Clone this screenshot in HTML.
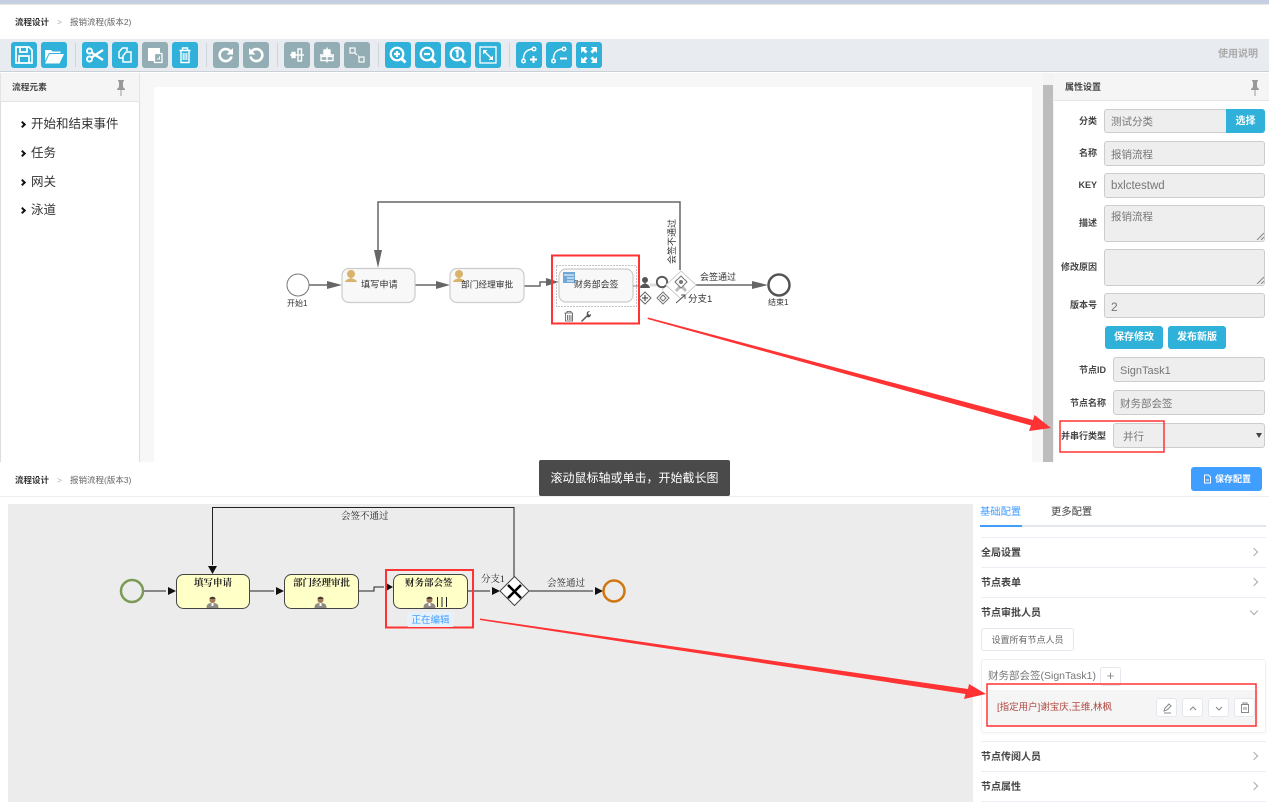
<!DOCTYPE html>
<html lang="zh"><head><meta charset="utf-8"><title>流程设计</title>
<style>
html,body{margin:0;padding:0;background:#fff}
#p{position:relative;width:1269px;height:802px;overflow:hidden;background:#fff;font-family:"Liberation Sans","Noto Sans CJK SC",sans-serif;color:#333;filter:blur(.3px)}
#p div{position:absolute;box-sizing:border-box}
.t{white-space:nowrap;height:16px;line-height:16px}
.b{width:26px;height:26px;top:42px;border-radius:3px;background:#2fb1d9}
.g{background:#93adb4}
.b svg{position:absolute;left:0;top:0}
.s{width:1px;height:24px;top:43px;background:#cfd5da}
.i{background:#eee;border:1px solid #ccc;border-radius:3px;color:#777;font-size:11px;padding-left:6px}
.l{font-size:9px;font-weight:700;color:#444;text-align:right;white-space:nowrap;height:14px;line-height:14px}
.m{font-size:12.500px;left:31px;color:#333}
.ch{left:20px;width:5px;height:5px;border-top:2px solid #111;border-right:2px solid #111;transform:rotate(45deg)}
.c{left:1251px;width:6px;height:6px;border-top:1px solid #aaa;border-right:1px solid #aaa;transform:rotate(45deg)}
.hr{left:981px;width:285px;height:1px;background:#ebeef5}
.r{left:981px;font-size:10px;font-weight:700;color:#444}
.sb{height:23px;top:326px;background:#2fb1d9;border-radius:3px;color:#fff;font-size:10px;font-weight:700;text-align:center;line-height:24px}
.ib{top:698px;height:19px;width:21px;background:#fff;border:1px solid #e4e7ed;border-radius:3px}
.ib svg{position:absolute;left:0;top:0}
</style></head><body><div id="p">
<div style="left:0;top:0;width:1269px;height:4px;background:#c5cfe2"></div>
<div style="left:0;top:4px;width:1269px;height:1px;background:#eee8dc"></div>
<div class="t" style="left:15px;top:14px;font-size:8.500px;font-weight:700;color:#333">流程设计</div>
<div class="t" style="left:57px;top:14px;font-size:8.500px;color:#aaa">&gt;</div>
<div class="t" style="left:70px;top:14px;font-size:8.500px;color:#666">报销流程(版本2)</div>

<div style="left:0;top:39px;width:1269px;height:33px;background:#e8ecf0;border-bottom:1px solid #c9d0d8"></div>

<div class="b" style="left:11px"><svg width="26" height="26" fill="none" stroke="#fff" stroke-width="1.700"><path d="M5 5h13l3 3v13H5z"/><path d="M9 5v5h7V5M8 21v-7h10v7"/></svg></div>
<div class="b" style="left:41px"><svg width="26" height="26" fill="#fff"><path d="M4 19V8h6l1.500 1.500h8V11H8z" /><path d="M4 21.500l4.500-9.500H23l-4.500 9.500z"/></svg></div>
<div class="s" style="left:75px"></div>
<div class="b" style="left:82px"><svg width="26" height="26" fill="none" stroke="#fff" stroke-width="1.900"><circle cx="7.500" cy="9" r="2.500"/><circle cx="7.500" cy="17" r="2.500"/><path d="M9.500 10.500L21 18M9.500 15.500L21 8" stroke-width="2.300"/></svg></div>
<div class="b" style="left:112px"><svg width="26" height="26" fill="none" stroke="#fff" stroke-width="1.500"><path d="M7 16V10l3.500-4H15v3M7 16h4"/><path d="M11 14l3-4h5v10h-8z"/></svg></div>
<div class="b g" style="left:142px"><svg width="26" height="26"><path d="M6 6h12v5h-6v8H6z" fill="#fff"/><path d="M12.500 11.500h7.500v9h-7.500z" fill="#93adb4" stroke="#fff" stroke-width="1.300"/><path d="M15 17h2.500v-2.500" fill="none" stroke="#fff"/></svg></div>
<div class="b" style="left:172px"><svg width="26" height="26" fill="none" stroke="#fff" stroke-width="1.400"><path d="M7.500 8.500h11M10.500 8.500V6h5v2.500M9 8.500v12h8v-12"/><path d="M11.200 11v7M13 11v7M14.800 11v7" stroke-width="1.100"/></svg></div>
<div class="s" style="left:206px"></div>
<div class="b g" style="left:213px"><svg width="26" height="26" fill="none" stroke="#fff" stroke-width="2.600"><path d="M17.500 9.500a6 6 0 1 0 1 5"/><path d="M20 6v6.500h-6.500z" fill="#fff" stroke="none"/></svg></div>
<div class="b g" style="left:243px"><svg width="26" height="26" fill="none" stroke="#fff" stroke-width="2.600"><path d="M8.500 9.500a6 6 0 1 1-1 5"/><path d="M6 6v6.500h6.500z" fill="#fff" stroke="none"/></svg></div>
<div class="s" style="left:277px"></div>
<div class="b g" style="left:284px"><svg width="26" height="26" fill="none" stroke="#fff" stroke-width="1.400"><rect x="8" y="10.500" width="3" height="5" fill="#fff"/><rect x="14" y="7" width="3.500" height="12"/><path d="M6 13h14"/></svg></div>
<div class="b g" style="left:314px"><svg width="26" height="26" fill="none" stroke="#fff" stroke-width="1.400"><rect x="10" y="8" width="6" height="4" fill="#fff"/><rect x="7" y="14.500" width="12" height="4"/><path d="M13 5.500v15M6 13h14"/></svg></div>
<div class="b g" style="left:344px"><svg width="26" height="26" fill="none" stroke="#fff" stroke-width="1.200"><rect x="6" y="6" width="5" height="5"/><rect x="15" y="15" width="5" height="5"/><path d="M11 11l2 2M14 14h1"/></svg></div>
<div class="s" style="left:378px"></div>
<div class="b" style="left:385px"><svg width="26" height="26" fill="none" stroke="#fff" stroke-width="2.200"><circle cx="12" cy="12" r="6.300"/><path d="M16.500 16.500l4 4" stroke-width="3"/><path d="M9 12h6M12 9v6"/></svg></div>
<div class="b" style="left:415px"><svg width="26" height="26" fill="none" stroke="#fff" stroke-width="2.200"><circle cx="12" cy="12" r="6.300"/><path d="M16.500 16.500l4 4" stroke-width="3"/><path d="M9 12h6"/></svg></div>
<div class="b" style="left:445px"><svg width="26" height="26" fill="none" stroke="#fff" stroke-width="2.200"><circle cx="12" cy="12" r="6.300"/><path d="M16.500 16.500l4 4" stroke-width="3"/><path d="M10.500 9.500l2-1v7"/></svg></div>
<div class="b" style="left:475px"><svg width="26" height="26" fill="none" stroke="#fff" stroke-width="1.300"><rect x="5" y="5" width="16" height="16"/><path d="M9 9l8 8" stroke-width="1.500"/><path d="M8 8h4.500L8 12.500zM18 18h-4.500l4.500-4.500z" fill="#fff" stroke="none"/></svg></div>
<div class="s" style="left:509px"></div>
<div class="b" style="left:516px"><svg width="26" height="26" fill="none" stroke="#fff" stroke-width="1.500"><circle cx="7.500" cy="19" r="1.800"/><circle cx="18" cy="7" r="1.800"/><path d="M7.500 17c0-6 2.500-9 8.500-10"/><path d="M14 17.500h7M17.500 14v7" stroke-width="2"/></svg></div>
<div class="b" style="left:546px"><svg width="26" height="26" fill="none" stroke="#fff" stroke-width="1.500"><circle cx="7.500" cy="19" r="1.800"/><circle cx="18" cy="7" r="1.800"/><path d="M7.500 17c0-6 2.500-9 8.500-10"/><path d="M14 16.500h7" stroke-width="2"/></svg></div>
<div class="b" style="left:576px"><svg width="26" height="26" fill="#fff"><path d="M5 5h6l-2 2 2.500 2.500-2 2L7 9l-2 2zM21 5v6l-2-2-2.500 2.500-2-2L17 7l-2-2zM5 21v-6l2 2 2.500-2.500 2 2L9 19l2 2zM21 21h-6l2-2-2.500-2.500 2-2L19 17l2-2z"/></svg></div>
<div class="t" style="left:1218px;top:47px;font-size:10px;font-weight:700;color:#aaa">使用说明</div>

<!-- left panel -->
<div style="left:0;top:73px;width:140px;height:389px;background:#fff;border-left:1px solid #ddd;border-right:1px solid #ddd"></div>
<div style="left:0;top:73px;width:140px;height:29px;background:#f5f5f5;border:1px solid #e4e4e4;border-top:0"></div>
<div class="t" style="left:12px;top:79px;font-size:8.700px;font-weight:700;color:#444">流程元素</div>
<svg style="position:absolute;left:116px;top:79px" width="10" height="18" fill="#999"><path d="M2 1h6v1.500H7V8l2 2v1H5.500v6h-1v-6H1v-1l2-2V2.500H2z"/></svg>
<div class="ch" style="top:122px"></div><div class="t m" style="top:116px">开始和结束事件</div>
<div class="ch" style="top:151px"></div><div class="t m" style="top:145px">任务</div>
<div class="ch" style="top:180px"></div><div class="t m" style="top:174px">网关</div>
<div class="ch" style="top:208px"></div><div class="t m" style="top:202px">泳道</div>

<!-- canvas -->
<div style="left:140px;top:73px;width:903px;height:389px;background:#f7f7f7"></div>
<div style="left:154px;top:87px;width:878px;height:375px;background:#fff"></div>
<div style="left:1043px;top:73px;width:11px;height:389px;background:#f3f3f3"></div>
<div style="left:1043px;top:85px;width:10px;height:377px;background:#bdbdbd"></div>

<!-- right panel -->
<div style="left:1054px;top:73px;width:215px;height:28px;background:#f5f5f5;border-bottom:1px solid #e4e4e4"></div>
<div class="t" style="left:1065px;top:79px;font-size:9px;font-weight:700;color:#444">属性设置</div>
<svg style="position:absolute;left:1250px;top:79px" width="10" height="18" fill="#999"><path d="M2 1h6v1.500H7V8l2 2v1H5.500v6h-1v-6H1v-1l2-2V2.500H2z"/></svg>

<div class="l" style="left:1060px;width:37px;top:114px">分类</div>
<div class="i" style="left:1104px;top:109px;width:123px;height:24px;line-height:25px;font-size:10.500px">测试分类</div>
<div style="left:1226px;top:109px;width:39px;height:24px;background:#2fb1d9;border-radius:0 3px 3px 0;color:#fff;font-size:10px;font-weight:700;text-align:center;line-height:25px">选择</div>
<div class="l" style="left:1060px;width:37px;top:146px">名称</div>
<div class="i" style="left:1104px;top:141px;width:161px;height:25px;line-height:26px;font-size:10.500px">报销流程</div>
<div class="l" style="left:1060px;width:37px;top:178px">KEY</div>
<div class="i" style="left:1104px;top:173px;width:161px;height:25px;line-height:25px;font-size:11.500px">bxlctestwd</div>
<div class="l" style="left:1060px;width:37px;top:216px">描述</div>
<div class="i" style="left:1104px;top:205px;width:161px;height:37px;line-height:22px;font-size:10.500px">报销流程</div>
<div class="l" style="left:1050px;width:47px;top:260px">修改原因</div>
<div class="i" style="left:1104px;top:249px;width:161px;height:37px"></div>
<svg style="position:absolute;left:1256px;top:232px" width="8" height="8" stroke="#888"><path d="M1 8L8 1M5 8L8 5"/></svg>
<svg style="position:absolute;left:1256px;top:276px" width="8" height="8" stroke="#888"><path d="M1 8L8 1M5 8L8 5"/></svg>
<div class="l" style="left:1060px;width:37px;top:298px">版本号</div>
<div class="i" style="left:1104px;top:293px;width:161px;height:25px;line-height:26px;font-size:12px">2</div>
<div class="sb" style="left:1105px;width:58px">保存修改</div>
<div class="sb" style="left:1168px;width:58px">发布新版</div>
<div class="l" style="left:1060px;width:46px;top:363px">节点ID</div>
<div class="i" style="left:1113px;top:357px;width:152px;height:25px;line-height:26px">SignTask1</div>
<div class="l" style="left:1060px;width:46px;top:396px">节点名称</div>
<div class="i" style="left:1113px;top:390px;width:152px;height:25px;line-height:26px;font-size:10.500px">财务部会签</div>
<div class="l" style="left:1056px;width:50px;top:429px">并串行类型</div>
<div class="i" style="left:1113px;top:423px;width:152px;height:25px;line-height:26px;padding-left:9px;font-size:10.500px">并行</div>
<svg style="position:absolute;left:1256px;top:433px" width="6" height="5" fill="#444"><path d="M0 0h6L3 5z"/></svg>

<!-- upper diagram -->
<svg style="position:absolute;left:0;top:0" width="1269" height="470" font-family="Liberation Sans,Noto Sans CJK SC,sans-serif" fill="none">
<g stroke="#666" stroke-width="1.500">
<path d="M680 270V202H378V255"/><path d="M309 285H330M415 285H439M524 286H540V282H548M696 285H755"/>
</g>
<g fill="#666"><path d="M374 250h8l-4 18zM327 281v8l15-4zM436 281v8l14-4zM546 278v8l13-4zM752 281v8l16-4z"/></g>
<circle cx="298" cy="285" r="11" fill="#fff" stroke="#777" stroke-width="1"/>
<circle cx="779" cy="285" r="10.500" fill="#fff" stroke="#555" stroke-width="2.500"/>
<rect x="342" y="268.500" width="73" height="34" rx="7" fill="#f8f8f8" stroke="#ccc" stroke-width="1.200"/>
<rect x="450" y="268.500" width="74" height="34" rx="7" fill="#f8f8f8" stroke="#ccc" stroke-width="1.200"/>
<path d="M351 271a3.500 3.500 0 0 1 0 8c2 1 5 1 6 4h-12c1-3 4-3 6-4a3.500 3.500 0 0 1 0-8z" fill="#d9b36c" transform="translate(0,-1)"/>
<path d="M459 271a3.500 3.500 0 0 1 0 8c2 1 5 1 6 4h-12c1-3 4-3 6-4a3.500 3.500 0 0 1 0-8z" fill="#d9b36c" transform="translate(0,-1)"/>
<rect x="556.500" y="265.500" width="80" height="41" stroke="#888" stroke-dasharray="1 2"/>
<rect x="559" y="269" width="74" height="33" rx="7" fill="#f8f8f8" stroke="#ccc" stroke-width="1.200"/>
<path d="M633 286H645" stroke="#888"/>
<path d="M650 285H668" stroke="#ddd" stroke-width="3"/>
<path d="M662 279l5 6-5 6z" fill="#ddd"/>
<rect x="563" y="272" width="12" height="11" fill="#6ea7d8"/><path d="M564 275h10M567 278h7M567 281h7" stroke="#fff"/>
<path d="M645 277a2.800 2.800 0 0 1 0 6c1 1 4 1 5 5h-10c1-4 4-4 5-5a2.800 2.800 0 0 1 0-6z" fill="#555"/>
<circle cx="662" cy="282" r="5.200" fill="#fff" stroke="#555" stroke-width="1.800"/>
<path d="M681 271l15 14-15 14-15-14z" fill="#fff" stroke="#ccc"/>
<path d="M676 280l10 11M686 280l-10 11" stroke="#bbb" stroke-width="3"/>
<path d="M681 276l6 6-6 6-6-6z" fill="#fff" stroke="#777"/><circle cx="681" cy="282" r="2" fill="#777"/>
<path d="M645 292l6 6-6 6-6-6z" fill="#fff" stroke="#666"/><path d="M642 298h6M645 295v6" stroke="#555" stroke-width="1.300"/>
<path d="M663 292l6 6-6 6-6-6z" fill="#fff" stroke="#777"/><path d="M663 295l3 3-3 3-3-3z" stroke="#777"/>
<path d="M676 303l9-8M681 295h4v4" stroke="#555"/>
<path d="M564.500 313h8.500M567 313v-1.500h4v1.500M565.500 313v8h7v-8M567.500 315v5M569.200 315v5M571 315v5" stroke="#555" stroke-width=".8"/>
<path d="M581 321l6-6c-1-3 1-4 3-4l-2 2 1 2 2-1c0 3-2 4-4 3l-5 5z" fill="#555"/>
<rect x="552" y="255.500" width="87" height="68" stroke="#f33" stroke-width="2"/>
<rect x="1060" y="421" width="104" height="31" stroke="#f33" stroke-width="1.500"/>
<g fill="#333" font-size="9.200">
<text x="361" y="287.500">填写申请</text><text x="461" y="287.500" font-size="8.700">部门经理审批</text><text x="574" y="287.500" font-size="8.900">财务部会签</text>
<text x="287" y="306" font-size="8">开始1</text><text x="768" y="305" font-size="8">结束1</text>
<text x="688" y="302" font-size="9.500">分支1</text><text x="700" y="280" font-size="9">会签通过</text>
<text transform="translate(675,264) rotate(-90)" font-size="9">会签不通过</text>
</g>
</svg>

<!-- lower section -->
<div style="left:0;top:462px;width:1269px;height:340px;background:#fff"></div>
<div style="left:0;top:496px;width:1269px;height:1px;background:#eee"></div>
<div class="t" style="left:15px;top:472px;font-size:8.500px;font-weight:700;color:#333">流程设计</div>
<div class="t" style="left:57px;top:472px;font-size:8.500px;color:#aaa">&gt;</div>
<div class="t" style="left:70px;top:472px;font-size:8.500px;color:#666">报销流程(版本3)</div>
<div style="left:539px;top:460px;width:191px;height:36px;background:#4a4a4a;border-radius:2px;color:#fff;font-size:12px;text-align:center;line-height:37px">滚动鼠标轴或单击，开始截长图</div>
<div style="left:1191px;top:467px;width:71px;height:24px;background:#409eff;border-radius:3px;color:#fff;font-size:9px;font-weight:700;line-height:25px;padding-left:24px">保存配置</div>
<svg style="position:absolute;left:1203px;top:474px" width="9" height="10" fill="none" stroke="#fff"><path d="M1.500 1h4l2 2v6h-6zM3 6h3"/></svg>
<div style="left:8px;top:504px;width:965px;height:298px;background:#ececec"></div>

<svg style="position:absolute;left:0;top:497px" width="973" height="305" viewBox="0 497 973 305" font-family="Liberation Serif,Noto Serif CJK SC,serif" fill="none">
<g stroke="#222" stroke-width="1">
<path d="M143 591H166M249 591H274M358 591H374V587H384M467 591H490M529 591H593"/>
<path d="M514 577V507.500H212.500V565"/>
</g>
<g fill="#111"><path d="M208 566h9l-4.500 8zM168 587v8l8-4zM276 587v8l8-4zM386 583v8l7-4zM492 587v8l8-4zM595 587v8l8-4z"/></g>
<circle cx="132" cy="591" r="11" fill="#ececec" stroke="#7a9a55" stroke-width="2.500"/>
<circle cx="614" cy="591" r="10.500" fill="#ececec" stroke="#d0760e" stroke-width="2.500"/>
<rect x="176.500" y="574.500" width="73" height="34" rx="7" fill="#ffffc8" stroke="#444"/>
<rect x="284.500" y="574.500" width="74" height="34" rx="7" fill="#ffffc8" stroke="#444"/>
<rect x="393.500" y="574.500" width="74" height="34" rx="7" fill="#ffffc8" stroke="#444"/>
<g><circle cx="212.500" cy="600" r="3" fill="#a07a5c"/><path d="M209.500 599c0-3 6-3 6 0z" fill="#4a3a30"/><path d="M206.500 608c0-4 2-5 6-5s6 1 6 5z" fill="#8f8a84"/><path d="M211.500 603h2v3h-2z" fill="#fff"/></g>
<g transform="translate(108,0)"><circle cx="212.500" cy="600" r="3" fill="#a07a5c"/><path d="M209.500 599c0-3 6-3 6 0z" fill="#4a3a30"/><path d="M206.500 608c0-4 2-5 6-5s6 1 6 5z" fill="#8f8a84"/><path d="M211.500 603h2v3h-2z" fill="#fff"/></g>
<g transform="translate(217,0)"><circle cx="212.500" cy="600" r="3" fill="#a07a5c"/><path d="M209.500 599c0-3 6-3 6 0z" fill="#4a3a30"/><path d="M206.500 608c0-4 2-5 6-5s6 1 6 5z" fill="#8f8a84"/><path d="M211.500 603h2v3h-2z" fill="#fff"/></g>
<path d="M437.500 597v10M442 597v10M446.500 597v10" stroke="#222"/>
<path d="M514.500 576.500l14.500 14.500-14.500 14.500-14.500-14.500z" fill="#fff" stroke="#444"/>
<path d="M508 585l13 13M521 585l-13 13" stroke="#000" stroke-width="2.500"/>
<g fill="#222" font-size="9.500" font-weight="700">
<text x="194" y="586">填写申请</text><text x="293" y="586">部门经理审批</text><text x="405" y="586">财务部会签</text>
<text x="341" y="519" font-weight="400">会签不通过</text><text x="481" y="582" font-weight="400">分支1</text><text x="547" y="586" font-weight="400">会签通过</text>
</g>
<rect x="386" y="570" width="87" height="57.500" stroke="#f33" stroke-width="2"/>
</svg>
<div style="left:407px;top:612px;width:47px;height:15px;background:#e6f1fc;border-radius:2px;color:#409eff;font-size:9.500px;text-align:center;line-height:18px">正在编辑</div>

<!-- lower right -->
<div class="t" style="left:980px;top:505px;font-size:10.300px;color:#409eff">基础配置</div>
<div class="t" style="left:1051px;top:505px;font-size:10.300px;color:#444">更多配置</div>
<div style="left:980px;top:525px;width:286px;height:1.500px;background:#e4e7ed"></div>
<div style="left:980px;top:525px;width:42px;height:1.500px;background:#409eff"></div>
<div class="hr" style="top:537px"></div><div class="hr" style="top:567px"></div><div class="hr" style="top:597px"></div><div class="hr" style="top:741px"></div><div class="hr" style="top:771px"></div><div class="hr" style="top:801px"></div>
<div class="t r" style="top:546px">全局设置</div><div class="c" style="top:549px"></div>
<div class="t r" style="top:576px">节点表单</div><div class="c" style="top:579px"></div>
<div class="t r" style="top:606px">节点审批人员</div><div class="c" style="top:608px;transform:rotate(135deg)"></div>
<div style="left:981px;top:628px;width:93px;height:23px;background:#fff;border:1px solid #e4e7ed;border-radius:3px;color:#666;font-size:9px;text-align:center;line-height:22px">设置所有节点人员</div>
<div style="left:981px;top:659px;width:285px;height:74px;background:#fff;border:1px solid #eef0f4;border-radius:3px;box-shadow:0 1px 3px rgba(0,0,0,.04)"></div>
<div class="t" style="left:988px;top:668px;font-size:10.500px;color:#777">财务部会签(SignTask1)</div>
<div style="left:1100px;top:667px;width:21px;height:19px;background:#fff;border:1px solid #e4e7ed;border-radius:3px;color:#888;font-size:13px;line-height:16px;text-align:center">+</div>
<div style="left:988px;top:690px;width:270px;height:37px;background:#f5f5f5"></div>
<div class="t" style="left:997px;top:700px;font-size:9.500px;color:#b0463f">[指定用户]谢宝庆,王维,林枫</div>
<div class="ib" style="left:1156px"><svg width="20" height="18" fill="none" stroke="#888"><path d="M7 12l1-3 4-4 2 2-4 4zM7 14h7"/></svg></div>
<div class="ib" style="left:1182px"><svg width="20" height="18" fill="none" stroke="#888"><path d="M7 11l3-3 3 3"/></svg></div>
<div class="ib" style="left:1208px"><svg width="20" height="18" fill="none" stroke="#888"><path d="M7 8l3 3 3-3"/></svg></div>
<div class="ib" style="left:1234px"><svg width="20" height="18" fill="none" stroke="#888"><path d="M6.500 5.500h7v8h-7zM8 5.500V4h4v1.500M9 8v3M11 8v3"/></svg></div>
<div class="t r" style="top:750px">节点传阅人员</div><div class="c" style="top:753px"></div>
<div class="t r" style="top:780px">节点属性</div><div class="c" style="top:783px"></div>

<!-- red annotations and arrows -->
<svg style="position:absolute;left:0;top:0;pointer-events:none" width="1269" height="802" fill="none">
<rect x="987" y="684" width="269" height="42" stroke="#f33" stroke-width="1.500"/>
<path d="M648 317.500L1033 420L1034.500 415L1051 428L1029 431L1031 425.500L647.500 319z" fill="#f33"/>
<path d="M480 618.500L968 689L969 684L986 694L964 699L965.500 694L479.800 620z" fill="#f33"/>
</svg>
</div></body></html>
